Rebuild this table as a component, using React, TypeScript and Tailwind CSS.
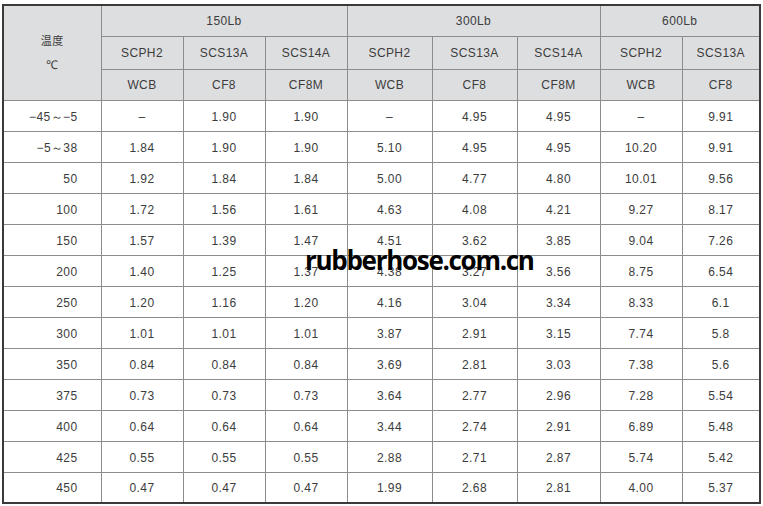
type Row = [string, ...string[]];

const rows: Row[] = [
  ["−45～−5", "–", "1.90", "1.90", "–", "4.95", "4.95", "–", "9.91"],
  ["−5～38", "1.84", "1.90", "1.90", "5.10", "4.95", "4.95", "10.20", "9.91"],
  ["50", "1.92", "1.84", "1.84", "5.00", "4.77", "4.80", "10.01", "9.56"],
  ["100", "1.72", "1.56", "1.61", "4.63", "4.08", "4.21", "9.27", "8.17"],
  ["150", "1.57", "1.39", "1.47", "4.51", "3.62", "3.85", "9.04", "7.26"],
  ["200", "1.40", "1.25", "1.37", "4.38", "3.27", "3.56", "8.75", "6.54"],
  ["250", "1.20", "1.16", "1.20", "4.16", "3.04", "3.34", "8.33", "6.1"],
  ["300", "1.01", "1.01", "1.01", "3.87", "2.91", "3.15", "7.74", "5.8"],
  ["350", "0.84", "0.84", "0.84", "3.69", "2.81", "3.03", "7.38", "5.6"],
  ["375", "0.73", "0.73", "0.73", "3.64", "2.77", "2.96", "7.28", "5.54"],
  ["400", "0.64", "0.64", "0.64", "3.44", "2.74", "2.91", "6.89", "5.48"],
  ["425", "0.55", "0.55", "0.55", "2.88", "2.71", "2.87", "5.74", "5.42"],
  ["450", "0.47", "0.47", "0.47", "1.99", "2.68", "2.81", "4.00", "5.37"],
];

const widths = [98, 82, 82, 82, 85, 85, 83, 82, 78];
const grades = ["SCPH2", "SCS13A", "SCS14A", "SCPH2", "SCS13A", "SCS14A", "SCPH2", "SCS13A"];
const materials = ["WCB", "CF8", "CF8M", "WCB", "CF8", "CF8M", "WCB", "CF8"];

const cell = "border border-[#8c8c8c] text-center";

export default function App() {
  return (
    <div className="relative h-[506px] w-[763px] bg-white pl-[2px] pt-[4px] font-['Liberation_Sans',Arial,sans-serif] text-[12px] tracking-[0.4px] text-[#3c3c3c]">
      <table className="w-[757px] table-fixed border-collapse border-2 border-[#3a3a3a]">
        <colgroup>
          {widths.map((w, i) => (
            <col key={i} style={{ width: w }} />
          ))}
        </colgroup>
        <thead className="bg-[#dcdee0]">
          <tr className="h-[31px]">
            <th rowSpan={3} className={`${cell} font-normal leading-[25px]`}>
              <div className="font-['Noto_Sans_CJK_SC',sans-serif] text-[11px]">温度</div>
              <div>℃</div>
            </th>
            <th colSpan={3} className={`${cell} font-normal`}>150Lb</th>
            <th colSpan={3} className={`${cell} font-normal`}>300Lb</th>
            <th colSpan={2} className={`${cell} font-normal`}>600Lb</th>
          </tr>
          <tr className="h-[33px]">
            {grades.map((g, i) => (
              <th key={i} className={`${cell} font-normal`}>{g}</th>
            ))}
          </tr>
          <tr className="h-[31px]">
            {materials.map((m, i) => (
              <th key={i} className={`${cell} font-normal`}>{m}</th>
            ))}
          </tr>
        </thead>
        <tbody>
          {rows.map((r, i) => (
            <tr key={i} className="h-[31px]">
              {r.map((v, j) => (
                <td key={j} className={j === 0 ? "border border-[#8c8c8c] pr-[23px] pt-[2px] text-right" : `${cell} pt-[2px]`}>
                  {v}
                </td>
              ))}
            </tr>
          ))}
        </tbody>
      </table>
      <div className="absolute left-[305px] top-[241px] font-['Open_Sans',sans-serif] text-[26px] font-bold tracking-[-1.3px] text-black">
        rubberhose.com.cn
      </div>
    </div>
  );
}
